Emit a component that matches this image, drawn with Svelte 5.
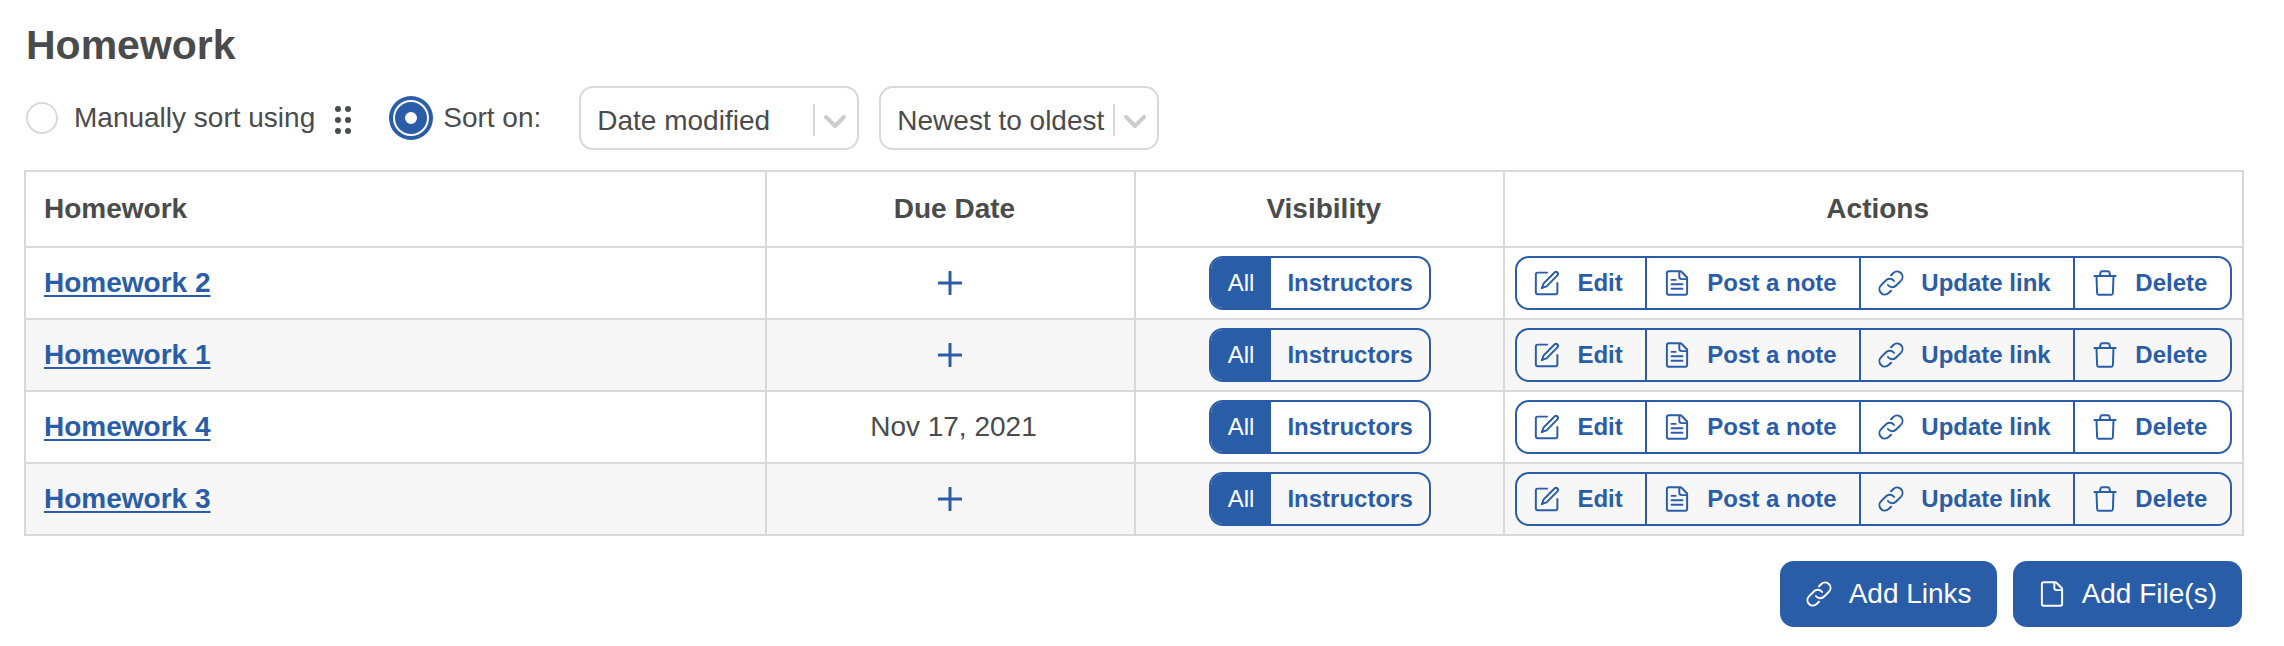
<script>
    let sortMode = $state('auto');
    let sortField = $state('Date modified');
    let sortOrder = $state('Newest to oldest');

    let items = $state([
        {id: 2, title: 'Homework 2', due: null, visibility: 'All'},
        {id: 1, title: 'Homework 1', due: null, visibility: 'All'},
        {id: 4, title: 'Homework 4', due: 'Nov 17, 2021', visibility: 'All'},
        {id: 3, title: 'Homework 3', due: null, visibility: 'All'}
    ])

    const actions = [
        {label: 'Edit', icon: 'edit'},
        {label: 'Post a note', icon: 'note'},
        {label: 'Update link', icon: 'link'},
        {label: 'Delete', icon: 'trash'}
    ]

    const page = 'M21.75 7.24V21.75a1.5 1.5 0 0 1-1.5 1.5H3.75a1.5 1.5 0 0 1-1.5-1.5V2.25a1.5 1.5 0 0 1 1.5-1.5h11.5a1.5 1.5 0 0 1 1.06.44l5 5a1.5 1.5 0 0 1 .44 1.05zM21.6 8.25h-5.1a2.25 2.25 0 0 1-2.25-2.25V.9';

    const icons = {
        edit: 'M12 2H2.75a1.5 1.5 0 0 0-1.5 1.5v17.75a1.5 1.5 0 0 0 1.5 1.5H20.5a1.5 1.5 0 0 0 1.5-1.5V12M11.6 15.2l-4.6 1.8 1.8-4.6L19.2 1.9a1.98 1.98 0 0 1 2.8 2.8z',
        note: page + 'M6.75 9h4M6.75 13.25h10.5M6.75 17.5h10.5',
        file: page,
        link: 'M12 19.42l-2.29 2.29A5.25 5.25 0 0 1 2.29 14.29l4.75-4.75A5.25 5.25 0 0 1 15 10.1M12 4.58l2.29-2.29A5.25 5.25 0 0 1 21.71 9.71l-4.75 4.75A5.25 5.25 0 0 1 9 13.9',
        trash: 'M1.8 5.25h20.4M3.8 5.25l.6 16.6a1.5 1.5 0 0 0 1.5 1.4h12.2a1.5 1.5 0 0 0 1.5-1.4l.6-16.6M7 5.25l.6-3.1A1.8 1.8 0 0 1 9.4.75h5.2a1.8 1.8 0 0 1 1.8 1.4l.6 3.1'
    }
</script>

{#snippet icon(name)}
    <svg class="icon" viewBox="-1.5 -1.5 27 27" aria-hidden="true"><path d={icons[name]} /></svg>
{/snippet}

{#snippet dropdownArrow()}
    <svg class="arrow" viewBox="0 0 24 16" aria-hidden="true"><path d="M3 3l9 9 9-9" /></svg>
{/snippet}

<main>
    <h1>Homework</h1>

    <div class="sort">
        <label class="manual">
            <input type="radio" name="sort" value="manual" bind:group={sortMode} />
            Manually sort using
            <svg class="grip" viewBox="0 0 16 28" aria-hidden="true">
                {#each [3, 14, 25] as y}
                    <circle cx="3" cy={y} r="3" />
                    <circle cx="13" cy={y} r="3" />
                {/each}
            </svg>
        </label>
        <label class="auto">
            <input type="radio" name="sort" value="auto" bind:group={sortMode} />
            Sort on:
        </label>
        <div class="selects">
            <div class="select">
                <select bind:value={sortField} aria-label="Sort field">
                    <option>Date modified</option>
                    <option>Title</option>
                </select>
                {@render dropdownArrow()}
            </div>
            <div class="select">
                <select bind:value={sortOrder} aria-label="Sort order">
                    <option>Newest to oldest</option>
                    <option>Oldest to newest</option>
                </select>
                {@render dropdownArrow()}
            </div>
        </div>
    </div>

    <table>
        <thead>
            <tr>
                <th class="name">Homework</th>
                <th>Due Date</th>
                <th>Visibility</th>
                <th class="wide">Actions</th>
            </tr>
        </thead>
        <tbody>
            {#each items as item (item.id)}
            <tr>
                <td class="name"><a href={'#'}>{item.title}</a></td>
                <td class:due={item.due}>
                    {#if item.due}
                        {item.due}
                    {:else}
                        <button class="plus" aria-label="Add due date">
                            <svg viewBox="0 0 24 24" aria-hidden="true"><path d="M12 1v22M1 12h22" /></svg>
                        </button>
                    {/if}
                </td>
                <td>
                    <div class="group toggle">
                        {#each ['All', 'Instructors'] as option}
                            <button
                                class:active={item.visibility == option}
                                onclick={() => item.visibility = option}
                            >{option}</button>
                        {/each}
                    </div>
                </td>
                <td>
                    <div class="group actions">
                        {#each actions as action}
                            <button>{@render icon(action.icon)}{action.label}</button>
                        {/each}
                    </div>
                </td>
            </tr>
            {/each}
        </tbody>
    </table>

    <div class="footer">
        <button>{@render icon('link')}Add Links</button>
        <button>{@render icon('file')}Add File(s)</button>
    </div>
</main>

<style>
:global(body) {
    background: #fff;
}

main {
    --blue: #2a5da8;
    --line: #d9d9d9;
    padding: 20px 40px 14px 24px;
    color: #4a4b4c;
    font: 28px/34px "Liberation Sans", Arial, sans-serif;
}

h1 {
    margin: 0;
    padding-left: 2px;
    font-size: 41px;
    line-height: 50px;
}

button {
    margin: 0;
    border: 0;
    background: none;
    color: inherit;
    font: inherit;
    cursor: pointer;
}

.icon {
    flex: none;
    width: 28px;
    height: 28px;

    path {
        fill: none;
        stroke: currentColor;
        stroke-width: 1.9;
        stroke-linecap: round;
        stroke-linejoin: round;
    }
}

.sort {
    display: flex;
    align-items: center;
    padding: 16px 0 20px 2px;

    label {
        display: flex;
        align-items: center;
    }

    .manual {
        gap: 16px;
    }

    .auto {
        gap: 16px;
        margin-left: 44px;
    }

    input {
        appearance: none;
        width: 32px;
        height: 32px;
        margin: 0;
        border: 2px solid var(--line);
        border-radius: 50%;
        background: #fff;

        &:checked {
            border: 10px solid var(--blue);
            box-shadow: 0 0 0 2px #fff, 0 0 0 6px var(--blue);
        }
    }
}

.grip {
    width: 16px;
    height: 28px;
    margin: 4px 0 0 4px;
    fill: #4a4b4c;
}

.selects {
    display: flex;
    gap: 20px;
    margin-left: 38px;
}

.select {
    position: relative;
    width: 280px;

    select {
        display: block;
        appearance: none;
        width: 100%;
        height: 64px;
        margin: 0;
        padding: 6px 44px 0 16px;
        border: 2px solid var(--line);
        border-radius: 14px;
        background: #fff;
        color: inherit;
        font: inherit;
    }

    &::after {
        content: "";
        position: absolute;
        top: 18px;
        right: 44px;
        width: 2px;
        height: 32px;
        background: var(--line);
    }
}

.arrow {
    position: absolute;
    top: 28px;
    right: 12px;
    width: 24px;
    height: 16px;
    pointer-events: none;

    path {
        fill: none;
        stroke: #ccc;
        stroke-width: 4;
        stroke-linecap: round;
        stroke-linejoin: round;
    }
}

table {
    width: 100%;
    table-layout: fixed;
    border-collapse: collapse;
}

th, td {
    height: 70px;
    padding: 0 10px;
    border: 2px solid var(--line);
    text-align: center;
}

th {
    height: 74px;
    padding-left: 18px;
}

.name {
    width: 33.4%;
    padding-left: 18px;
    box-sizing: border-box;
    text-align: left;
}

.wide {
    width: 33.3%;
    box-sizing: border-box;
}

.due {
    padding-left: 16px;
}

tbody tr:nth-child(even) {
    background: #f7f7f7;
}

a {
    color: var(--blue);
    font-weight: bold;
    text-decoration-thickness: 2px;
    text-underline-offset: 3px;
}

.plus {
    display: block;
    margin: 0 auto;
    padding: 0;

    svg {
        display: block;
        width: 24px;
        height: 24px;
    }

    path {
        stroke: var(--blue);
        stroke-width: 3;
        stroke-linecap: round;
    }
}

.group {
    display: flex;
    height: 54px;
    box-sizing: border-box;
    overflow: hidden;
    border: 2px solid var(--blue);
    border-radius: 14px;
    color: var(--blue);
    font-size: 24px;

    button {
        font-weight: bold;
        white-space: nowrap;
    }
}

.toggle {
    width: max-content;
    margin: 0 auto;

    button {
        padding: 0 16px;
    }

    .active {
        padding: 0 17px;
        background: var(--blue);
        color: #fff;
        font-weight: normal;
    }
}

.actions button {
    display: flex;
    flex: auto;
    align-items: center;
    gap: 16px;
    padding: 0 22px 0 16px;

    & + button {
        border-left: 2px solid var(--blue);
    }
}

.footer {
    display: flex;
    justify-content: flex-end;
    gap: 16px;
    margin: 25px 2px 0 0;

    button {
        display: flex;
        align-items: center;
        gap: 16px;
        height: 66px;
        padding: 0 25px;
        border-radius: 14px;
        background: var(--blue);
        color: #fff;
    }
}
</style>
